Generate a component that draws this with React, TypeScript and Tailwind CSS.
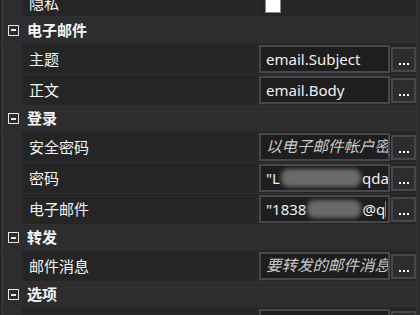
import React from "react";

const FONT = { fontFamily: '"Noto Sans", "Noto Sans CJK SC", sans-serif' };

function Minus() {
  return (
    <div className="ml-[8px] w-[11px] h-[11px] border border-[#e6e6e6] flex items-center justify-center shrink-0">
      <div className="w-[5px] h-[2px] bg-[#e6e6e6]" />
    </div>
  );
}

function Gutter() {
  return (
    <div className="w-[22px] bg-[#2d2d30] shrink-0 flex">
      <div className="w-[2px] bg-[#27272a]" />
      <div className="w-[1px] bg-[#404044]" />
    </div>
  );
}

function Cat({ label, h = "h-[26px]" }: { label: string; h?: string }) {
  return (
    <div className={"relative flex items-center bg-[#2d2d30] border-b border-[#28282b] " + h}>
      <div className="absolute left-0 top-0 bottom-0 flex">
        <div className="w-[2px] bg-[#27272a]" />
        <div className="w-[1px] bg-[#404044]" />
      </div>
      <Minus />
      <span className="ml-[8px] text-[15px] font-bold text-[#f5f5f5] leading-none">{label}</span>
    </div>
  );
}

function Btn() {
  return (
    <div className="ml-[1px] w-[25px] h-[25px] border-2 border-[#48484c] bg-[#2d2d30] flex items-end justify-center gap-[2px] pb-[5px] shrink-0">
      <div className="w-[2px] h-[2px] bg-white" />
      <div className="w-[2px] h-[2px] bg-white" />
      <div className="w-[2px] h-[2px] bg-white" />
    </div>
  );
}

function Box({ children, italic }: { children: React.ReactNode; italic?: boolean }) {
  return (
    <div className="w-[131px] h-[28px] border-2 border-[#48484c] bg-[#1e1e1e] flex items-center overflow-hidden pl-[5px] shrink-0">
      <div
        className={
          "whitespace-nowrap leading-none flex items-center " +
          (italic ? "italic text-[15.5px] text-[#c9c9c9]" : "text-[15px] text-[#f0f0f0]")
        }
      >
        {children}
      </div>
    </div>
  );
}

function Prop({ name, value }: { name: string; value?: React.ReactNode }) {
  return (
    <div className="flex h-[31px]">
      <Gutter />
      <div className="flex-1 flex bg-[#252526] border-b border-[#303033]">
        <div className="w-[236px] shrink-0 border-r border-[#2d2d30] pl-[7px] flex items-center text-[15px] text-[#f5f5f5] leading-none">
          {name}
        </div>
        <div className="flex-1 flex items-center pl-[1px]">{value}</div>
      </div>
    </div>
  );
}

function Blur({ w }: { w: number }) {
  return (
    <span className="inline-flex items-center h-[20px] mx-[1px]" style={{ width: w }}>
      <span className="block w-full h-[18px] rounded-[8px] bg-[#6a6a6a] blur-[2px]" />
    </span>
  );
}

export default function App() {
  return (
    <div className="w-[420px] h-[315px] overflow-hidden bg-[#2d2d30] flex" style={FONT}>
      <div className="w-[416px] flex flex-col">
        <div className="mt-[-14px]">
          <div className="flex h-[31px]">
            <Gutter />
            <div className="flex-1 flex bg-[#252526] border-b border-[#303033]">
              <div className="w-[236px] shrink-0 border-r border-[#2d2d30] pl-[7px] pt-[4px] flex items-center text-[15px] text-[#f5f5f5] leading-none">
                隐私
              </div>
              <div className="flex-1 flex items-center pl-[7px] pt-[7px]">
                <div className="w-[16px] h-[16px] bg-white border border-[#8a8a8a]" />
              </div>
            </div>
          </div>
          <Cat label="电子邮件" h="h-[27px]" />
          <Prop name="主题" value={<><Box>email.Subject</Box><Btn /></>} />
          <Prop name="正文" value={<><Box>email.Body</Box><Btn /></>} />
          <Cat label="登录" />
          <Prop name="安全密码" value={<><Box italic>以电子邮件帐户密码</Box><Btn /></>} />
          <Prop
            name="密码"
            value={
              <>
                <Box>
                  <span>"L</span>
                  <Blur w={80} />
                  <span>qda</span>
                </Box>
                <Btn />
              </>
            }
          />
          <Prop
            name="电子邮件"
            value={
              <>
                <Box>
                  <span>"1838</span>
                  <Blur w={54} />
                  <span>@q</span>
                  <span className="inline-block w-[1px] h-[16px] bg-[#3b8eea]" />
                </Box>
                <Btn />
              </>
            }
          />
          <Cat label="转发" />
          <Prop name="邮件消息" value={<><Box italic>要转发的邮件消息</Box><Btn /></>} />
          <Cat label="选项" />
          <Prop name="" value={<><Box>{""}</Box><Btn /></>} />
        </div>
      </div>
      <div className="w-[4px] bg-[#2d2d30] flex">
        <div className="w-[1px] ml-[1px] bg-[#3a3a3e]" />
      </div>
    </div>
  );
}
